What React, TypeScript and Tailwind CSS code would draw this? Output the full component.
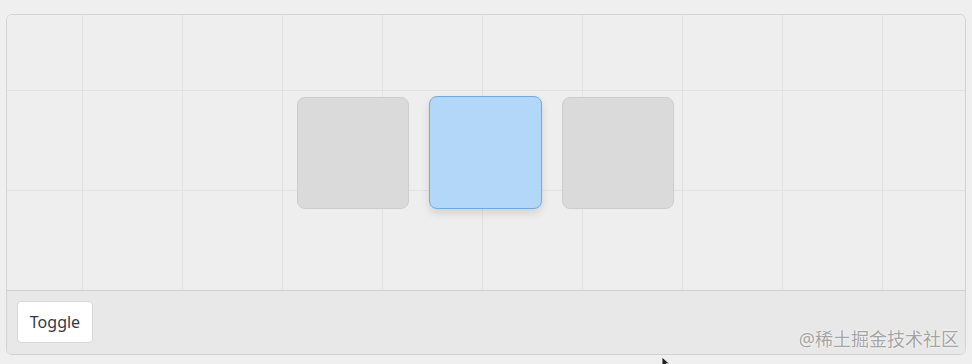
import React from "react";

export default function App() {
  return (
    <div className="relative w-[972px] h-[364px] bg-[#efefef] px-[6px] pt-[14px] overflow-hidden" style={{ fontFamily: '"Noto Sans", "Noto Sans CJK SC", sans-serif' }}>
      <div className="w-[960px] h-[341px] rounded-[6px] border border-[#d2d2d2] overflow-hidden flex flex-col">
        <div className="h-[276px] bg-[#eeeeee] border-b border-[#d0d0d0] flex items-center justify-center gap-[20px] pr-[2px] bg-[image:linear-gradient(to_right,#e1e1e1_1px,transparent_1px),linear-gradient(to_bottom,#e1e1e1_1px,transparent_1px)] bg-[size:100px_100px] bg-[position:75px_75px]">
          <div className="w-[112px] h-[112px] rounded-[8px] bg-[#dadada] border border-[#cdcdcd]" />
          <div className="w-[113px] h-[113px] rounded-[8px] bg-[#b3d7f8] border border-[#6eaae4] shadow-[0_4px_8px_rgba(0,0,0,0.12)]" />
          <div className="w-[112px] h-[112px] rounded-[8px] bg-[#dadada] border border-[#cdcdcd]" />
        </div>
        <div className="flex-1 bg-[#e8e8e8] flex items-start justify-between px-[10px] pt-[10px]">
          <button className="h-[42px] w-[76px] rounded-[4px] bg-white border border-[#d6d6d6] text-[16px] text-[#333a44] flex items-center justify-center">
            Toggle
          </button>
          <div className="self-end mb-[2px] mr-[-4px] text-[18px] leading-[26px] text-[#a3a3a3] [text-shadow:0_0_2px_#ffffff,0_0_1px_#ffffff]">
            @稀土掘金技术社区
          </div>
        </div>
      </div>
      <svg className="absolute left-[661px] top-[357px]" width="10" height="12" viewBox="0 0 10 12">
        <path d="M1 0 L1 10 L3.5 7.5 L6 11 L7.5 10.2 L5.2 6.8 L8.5 6.8 Z" fill="#222" stroke="#fff" strokeWidth="0.8" />
      </svg>
    </div>
  );
}
